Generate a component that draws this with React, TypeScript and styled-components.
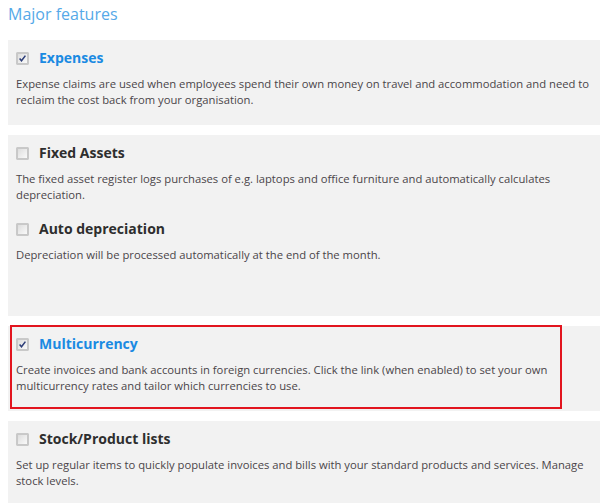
import styled, { createGlobalStyle } from "styled-components";

const GlobalStyle = createGlobalStyle`
  html, body {
    margin: 0;
    padding: 0;
    background: #ffffff;
    overflow: hidden;
  }
  body {
    font-family: "Open Sans", "DejaVu Sans", sans-serif;
  }
`;

type Feature = {
  name: string;
  text: string;
  checked?: boolean;
};

type Group = {
  features: Feature[];
  highlighted?: boolean;
  tall?: boolean;
};

const groups: Group[] = [
  {
    features: [
      {
        name: "Expenses",
        checked: true,
        text: "Expense claims are used when employees spend their own money on travel and accommodation and need to reclaim the cost back from your organisation.",
      },
    ],
  },
  {
    tall: true,
    features: [
      {
        name: "Fixed Assets",
        text: "The fixed asset register logs purchases of e.g. laptops and office furniture and automatically calculates depreciation.",
      },
      {
        name: "Auto depreciation",
        text: "Depreciation will be processed automatically at the end of the month.",
      },
    ],
  },
  {
    highlighted: true,
    features: [
      {
        name: "Multicurrency",
        checked: true,
        text: "Create invoices and bank accounts in foreign currencies. Click the link (when enabled) to set your own multicurrency rates and tailor which currencies to use.",
      },
    ],
  },
  {
    features: [
      {
        name: "Stock/Product lists",
        text: "Set up regular items to quickly populate invoices and bills with your standard products and services. Manage stock levels.",
      },
    ],
  },
];

const CheckBox = ({ checked }: { checked?: boolean }) => (
  <Box width="13" height="13" viewBox="0 0 13 13">
    <defs>
      <linearGradient id="cbfill" x1="0" y1="0" x2="1" y2="1">
        <stop offset="0" stopColor="#dcdcdc" />
        <stop offset="1" stopColor="#fbfbfb" />
      </linearGradient>
    </defs>
    <rect x="0.5" y="0.5" width="12" height="12" fill="#a0a0a0" />
    <rect x="1.5" y="1.5" width="10" height="10" fill="url(#cbfill)" stroke="#c8c8c8" />
    {checked && (
      <path
        d="M3.6 6.6 L5.5 8.8 L9.4 3.6"
        fill="none"
        stroke="#2c3d78"
        strokeWidth="1.5"
      />
    )}
  </Box>
);

const App = () => {
  return (
    <Page>
      <GlobalStyle />
      <Title>Major features</Title>
      <List>
        {groups.map((g, i) => (
          <Panel key={i} $tall={g.tall}>
            {g.features.map((f) => (
              <FeatureBlock key={f.name}>
                <Header>
                  <CheckBox checked={f.checked} />
                  <Name $on={f.checked}>{f.name}</Name>
                </Header>
                <Description>{f.text}</Description>
              </FeatureBlock>
            ))}
            {g.highlighted && <Highlight />}
          </Panel>
        ))}
      </List>
    </Page>
  );
};

export default App;

const Page = styled.div`
  padding: 0 0 0 8px;
`;

const Title = styled.h2`
  margin: 0;
  padding-top: 2px;
  height: 38px;
  font-size: 16px;
  font-weight: 400;
  line-height: 24px;
  color: #55a9e8;
`;

const List = styled.div`
  display: flex;
  flex-direction: column;
  gap: 10px;
`;

const Panel = styled.section<{ $tall?: boolean }>`
  position: relative;
  background: #f2f2f2;
  padding: 8px 8px ${(p) => (p.$tall ? "53px" : "17px")} 8px;
  display: flex;
  flex-direction: column;
  gap: 16px;
`;

const FeatureBlock = styled.div`
  display: flex;
  flex-direction: column;
  gap: 8px;
`;

const Header = styled.div`
  display: flex;
  align-items: center;
  height: 20px;
`;

const Box = styled.svg`
  display: block;
  flex: none;
  margin-right: 10px;
`;

const Name = styled.span<{ $on?: boolean }>`
  font-size: 14px;
  font-weight: 700;
  line-height: 20px;
  color: ${(p) => (p.$on ? "#1a8ae2" : "#2e2e2e")};
`;

const Description = styled.p`
  margin: 0;
  font-size: 11.25px;
  line-height: 16px;
  color: #4a4549;
`;

const Highlight = styled.div`
  position: absolute;
  left: 2px;
  top: -1px;
  width: 552px;
  height: 84px;
  box-sizing: border-box;
  border: 2px solid #e2141e;
  pointer-events: none;
`;
